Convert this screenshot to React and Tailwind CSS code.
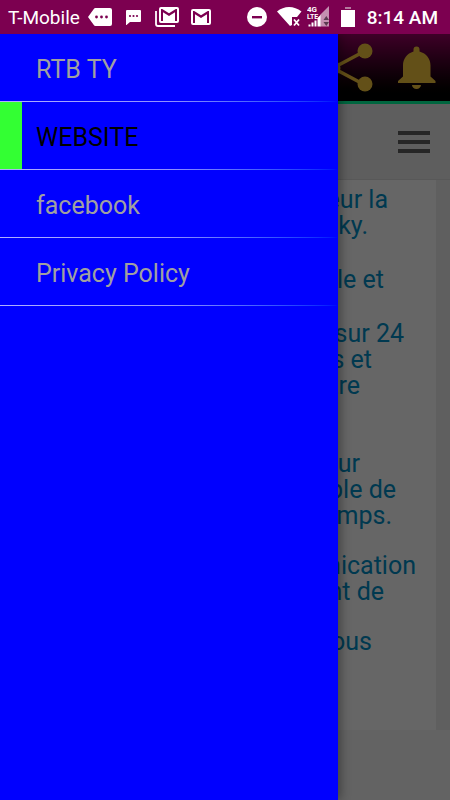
import React, { useState } from 'react';

const menuItems = [
  { label: 'RTB TY', href: '#home' },
  { label: 'WEBSITE', href: '#website' },
  { label: 'facebook', href: '#facebook' },
  { label: 'Privacy Policy', href: '#privacy' }
];

// Each line keeps its own right inset inside the article column
const paragraphs = [
  { spacing: '', lines: [['eur la', 'pr-12'], ['ky.', 'pr-17']] },
  { spacing: 'mt-7', lines: [['le et', 'pr-13']] },
  { spacing: 'mt-7', lines: [['sur 24', 'pr-8'], ['s et', 'pr-16'], ['tre', 'pr-19']] },
  { spacing: 'mt-13', lines: [['ur', 'pr-19'], ['ble de', 'pr-10'], ['mps.', 'pr-11']] },
  { spacing: 'mt-6', lines: [['nication', 'pr-5'], ['nt de', 'pr-13']] },
  { spacing: 'mt-6', lines: [['ous', 'pr-16']] }
];

const MoreIcon = () => (
  <svg width="24" height="18" viewBox="0 0 24 18" fill="white">
    <path d="M7.500 0H22a2 2 0 0 1 2 2v14a2 2 0 0 1-2 2H7.500a2 2 0 0 1-1.700-.9L0 9 5.800.9A2 2 0 0 1 7.500 0z" />
    <g fill="#7c0050">
      <circle cx="8.500" cy="9" r="1.400" />
      <circle cx="13.500" cy="9" r="1.400" />
      <circle cx="18.500" cy="9" r="1.400" />
    </g>
  </svg>
);

const MessageIcon = () => (
  <svg width="15" height="15" viewBox="0 0 15 15" fill="white">
    <path d="M1 0h13a1 1 0 0 1 1 1v10a1 1 0 0 1-1 1H4l-3.500 3H0V1a1 1 0 0 1 1-1z" />
    <g fill="#7c0050">
      <circle cx="4" cy="6" r="1.100" />
      <circle cx="7.500" cy="6" r="1.100" />
      <circle cx="11" cy="6" r="1.100" />
    </g>
  </svg>
);

const envelope =
  'M20 18h-2V9.250L12 13 6 9.250V18H4V6h1.200L12 10.250 18.800 6H20M20 4H4a2 2 0 0 0-2 2v12a2 2 0 0 0 2 2h16a2 2 0 0 0 2-2V6a2 2 0 0 0-2-2z';

const MailStackIcon = () => (
  <svg width="24" height="20" viewBox="0 0 24 20" fill="white">
    <path d="M1 4v13a2 2 0 0 0 2 2h17" fill="none" stroke="white" strokeWidth="1.800" />
    <path d={envelope} transform="translate(2 -4)" />
  </svg>
);

const MailIcon = () => (
  <svg width="20" height="16" viewBox="2 4 20 16" fill="white">
    <path d={envelope} />
  </svg>
);

const DoNotDisturbIcon = () => (
  <svg width="20" height="20" viewBox="0 0 20 20">
    <circle cx="10" cy="10" r="10" fill="white" />
    <rect x="5" y="9" width="10" height="2.400" fill="#7c0050" />
  </svg>
);

const WifiIcon = () => (
  <svg width="26" height="20" viewBox="0 0 26 20">
    <path d="M0 4.500C7-1.500 17-1.500 24.500 4.500L20 10h-5v8l-2 1z" fill="white" />
    <path d="M17 12.500l5 6M22 12.500l-5 6" stroke="white" strokeWidth="1.800" />
  </svg>
);

const SignalIcon = () => (
  <svg width="24" height="22" viewBox="0 0 24 22">
    <path d="M22 0v20.500h-9V9z" fill="#c48fb0" />
    <path d="M1.500 20.500v-2h2v2zM4.500 20.500v-4h2v4zM7.500 20.500v-6h2v6zM10.500 20.500V12l3-3v11.500z" fill="white" />
    <path d="M16.500 14l2.800-4 2.700 4zM16.500 16l2.800 4 2.700-4z" fill="#5a3a50" />
    <text x="0" y="6" fontSize="8" fontWeight="700" fontFamily="Roboto, sans-serif" fill="white">4G</text>
    <text x="0" y="13" fontSize="7" fontWeight="700" fontFamily="Roboto, sans-serif" fill="white">LTE</text>
  </svg>
);

const BatteryIcon = () => (
  <svg width="14" height="20" viewBox="0 0 14 20">
    <rect x="4" y="0" width="6" height="2" fill="#b47a9e" />
    <rect x="0" y="3" width="14" height="17" fill="white" />
  </svg>
);

const ShareIcon = () => (
  <svg width="50" height="50" viewBox="0 0 50 50" fill="#f8c83c">
    <path d="M41 8L9 25l32 17" fill="none" stroke="#f8c83c" strokeWidth="3.500" />
    <circle cx="41" cy="8" r="7.500" />
    <circle cx="9" cy="25" r="7.500" />
    <circle cx="41" cy="41" r="7.500" />
  </svg>
);

const BellIcon = () => (
  <svg width="38" height="44" viewBox="0 0 38 44" fill="#f8c83c">
    <path d="M15.500 5.500V3.500a3 3 0 0 1 6 0v2C28.500 7.500 32.500 13 32.500 19.500v11l5 4.500v2H0v-2l5-4.500v-11C5 13 9 7.500 15.500 5.500z" />
    <path d="M14 39h9a4.500 4 0 0 1-9 0z" />
  </svg>
);

const StatusBar = () => (
  <header className="flex h-[34px] shrink-0 items-center justify-between bg-[#7c0050] pl-2 pr-3 text-[19px] text-white">
    <div className="flex items-center">
      <span className="mr-2 pt-0.5">T-Mobile</span>
      <MoreIcon />
      <span className="mx-3.5"><MessageIcon /></span>
      <MailStackIcon />
      <span className="ml-3"><MailIcon /></span>
    </div>
    <div className="flex items-center">
      <DoNotDisturbIcon />
      <span className="ml-2.5 mr-1"><WifiIcon /></span>
      <SignalIcon />
      <span className="ml-2.5 mr-3"><BatteryIcon /></span>
      <time className="pt-0.5 font-medium">8:14 AM</time>
    </div>
  </header>
);

const PageContent = () => (
  <div className="flex h-full flex-col bg-[#f8f8f8]">
    <div className="flex h-[70px] shrink-0 items-center justify-end gap-6 border-b-3 border-[#00ff9f] bg-linear-to-b from-[#9c0064] to-black pr-3.5">
      <button aria-label="Share"><ShareIcon /></button>
      <button aria-label="Notifications"><BellIcon /></button>
    </div>
    <div className="flex h-[76px] shrink-0 items-center justify-end border-b border-[#dcdcdc] bg-[#ebebeb] pr-5">
      <button aria-label="Site menu" className="flex flex-col gap-[5px]">
        <span className="h-1 w-8 bg-[#606060]" />
        <span className="h-1 w-8 bg-[#606060]" />
        <span className="h-1 w-8 bg-[#606060]" />
      </button>
    </div>
    <div className="bg-[#eeeeee] pr-3.5">
      <article className="bg-white pt-[7px] pb-[75px] text-right text-[25px] leading-[26px] text-[#0090c8]">
        {paragraphs.map((paragraph, index) => (
          <p key={index} className={paragraph.spacing}>
            {paragraph.lines.map(([text, inset]) => (
              <span key={text} className={`block ${inset}`}>{text}</span>
            ))}
          </p>
        ))}
      </article>
    </div>
  </div>
);

const Drawer = ({ selected, onSelect }) => (
  <nav className="absolute inset-y-0 left-0 w-3/4 bg-[#0000ff] shadow-[2px_0_10px_rgba(0,0,0,0.4)]">
    <ul>
      {menuItems.map((item) => {
        const active = item.label === selected;
        return (
          <li key={item.label}>
            <a
              href={item.href}
              onClick={() => onSelect(item.label)}
              className={`flex h-[67px] items-center text-[25px] ${active ? 'text-black' : 'text-[#a0a0a0]'}`}
            >
              <span className={`mr-3.5 h-full w-[22px] ${active ? 'bg-[#33ff33]' : ''}`} />
              <span className="pt-1">{item.label}</span>
            </a>
            <div className="h-px bg-linear-to-r from-[#b0b0ff] via-[#9090ff] to-[#0000ff]" />
          </li>
        );
      })}
    </ul>
  </nav>
);

const App = () => {
  const [selected, setSelected] = useState('WEBSITE');

  return (
    <div className="flex h-screen flex-col overflow-hidden font-[Roboto,sans-serif]">
      <StatusBar />
      <main className="relative min-h-0 flex-1 overflow-hidden">
        <PageContent />
        <div className="absolute inset-0 bg-black/60" />
        <Drawer selected={selected} onSelect={setSelected} />
      </main>
    </div>
  );
};

export default App;
